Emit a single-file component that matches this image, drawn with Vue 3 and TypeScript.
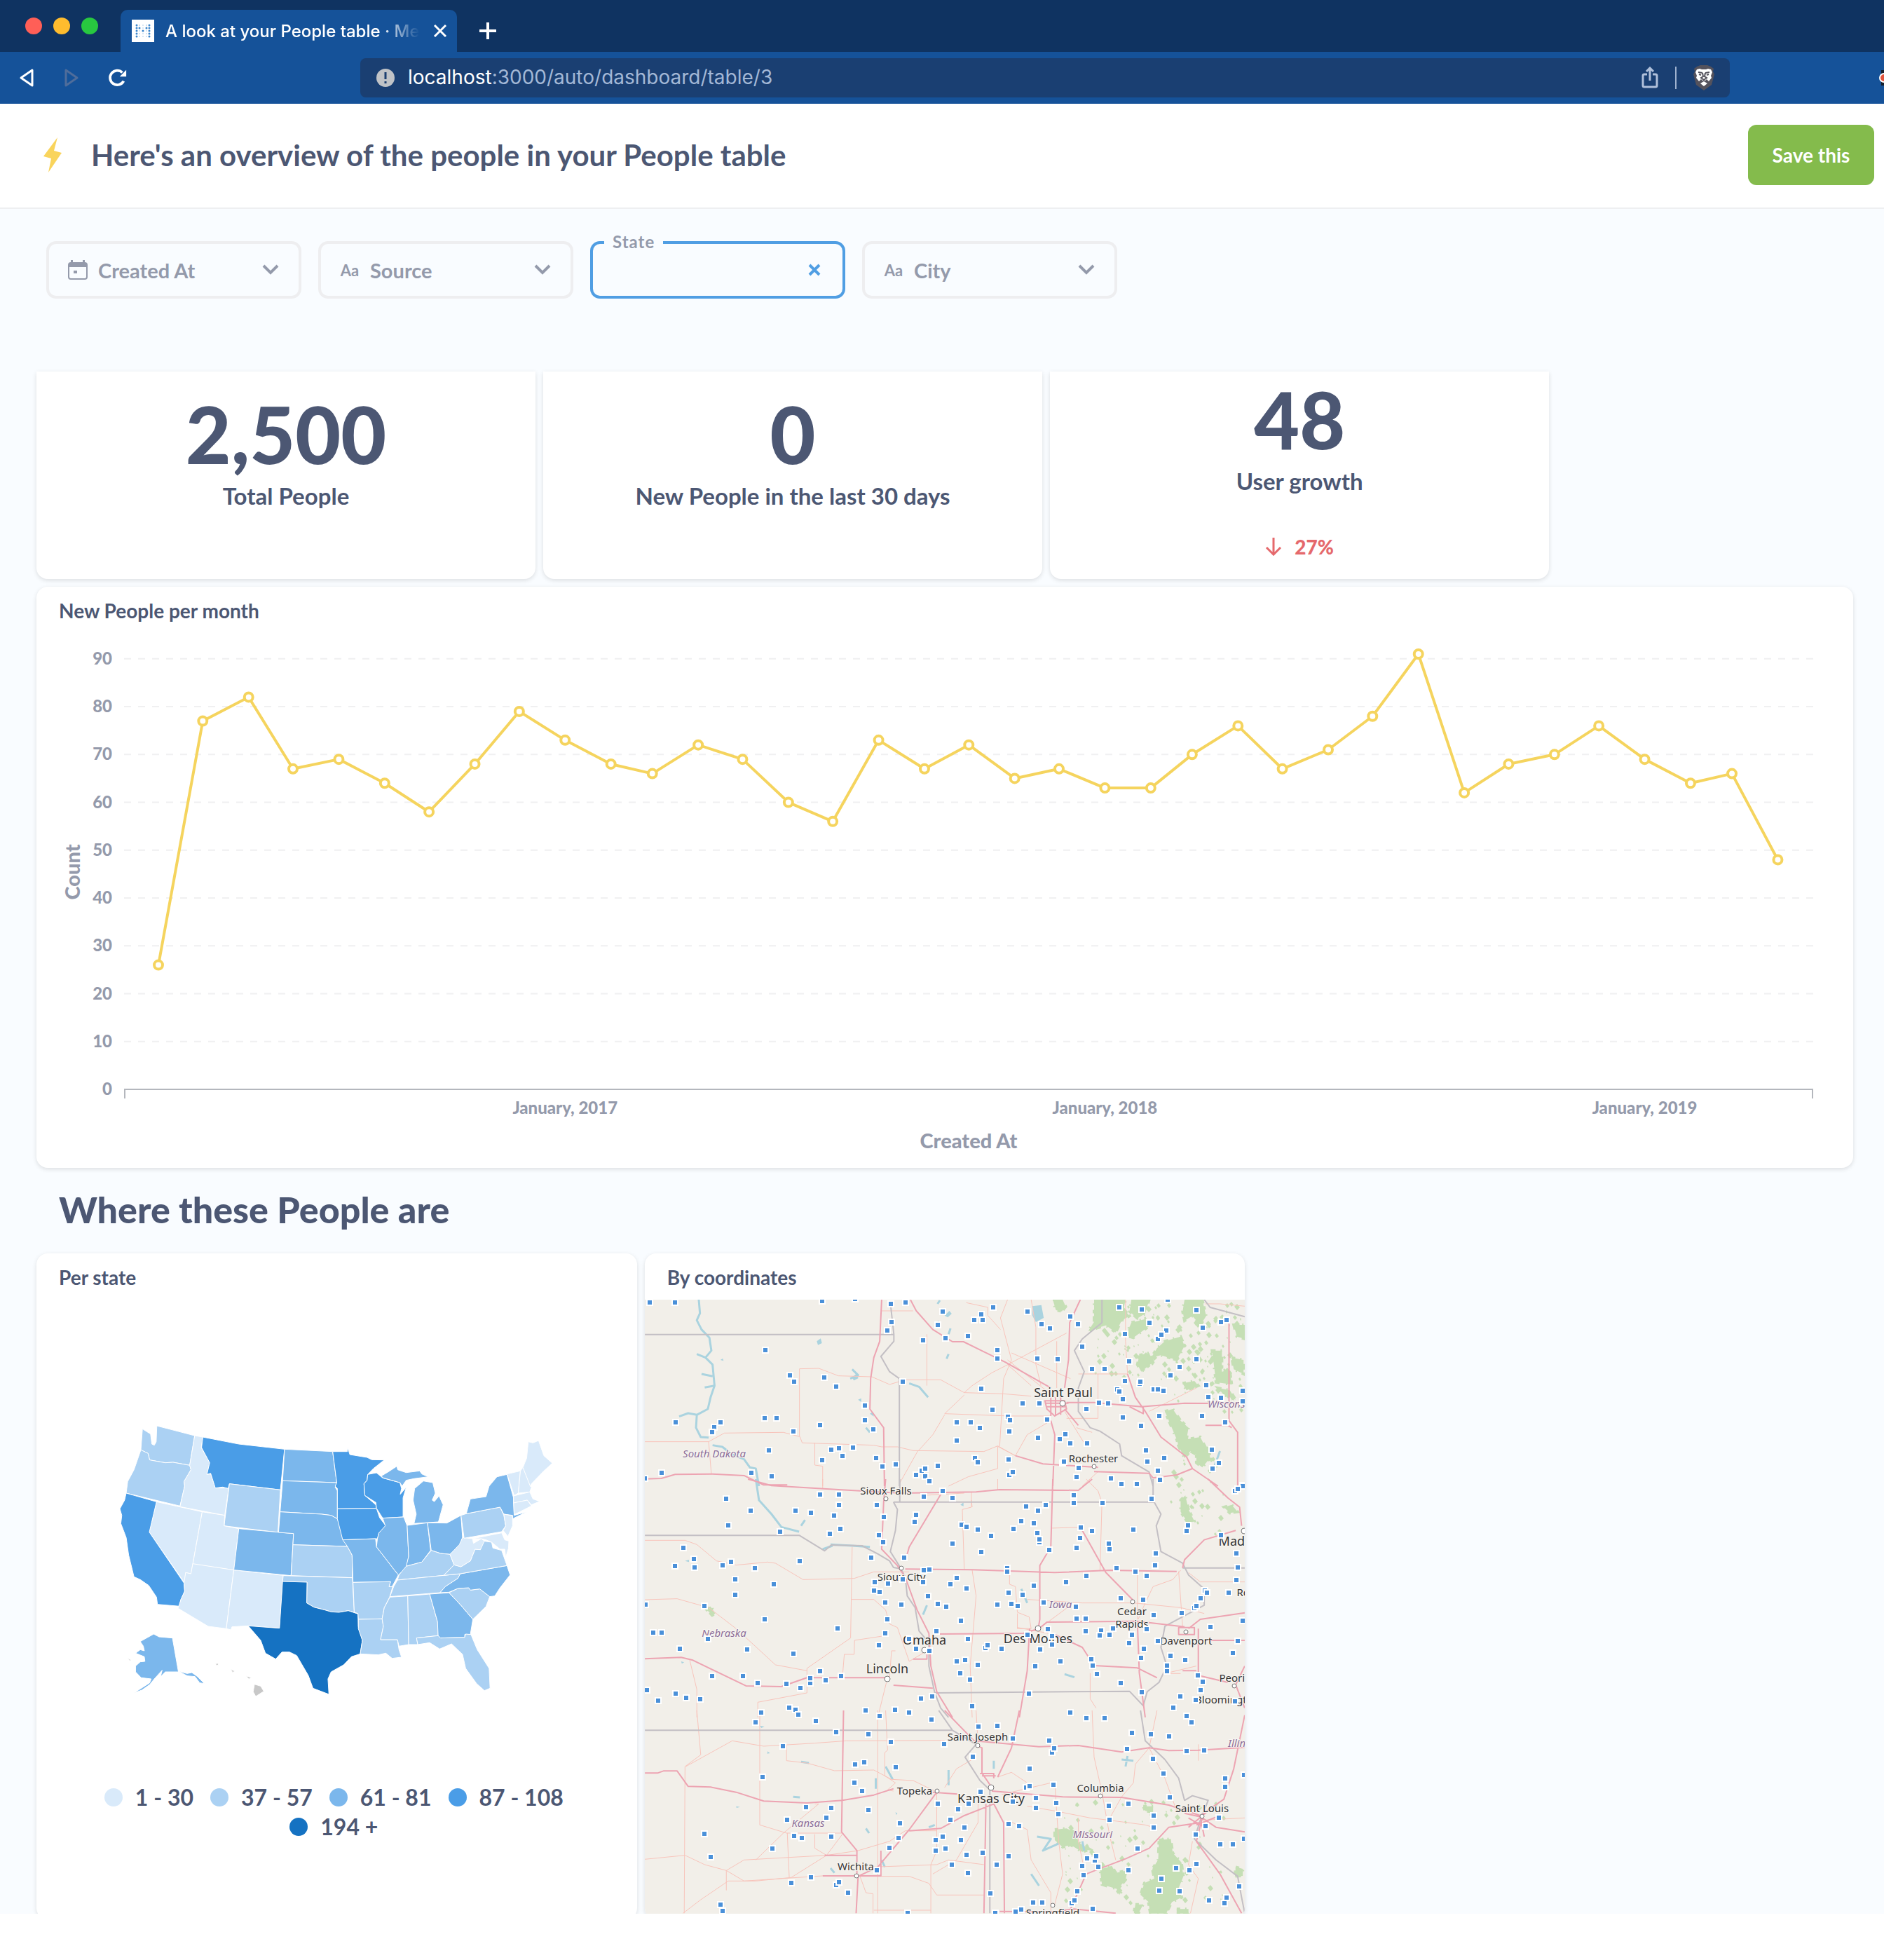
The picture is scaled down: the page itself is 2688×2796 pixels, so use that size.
<script setup lang="ts">
import { ref } from 'vue'

const stateFilter = ref('')

interface Filter { id: string; label: string; icon: 'calendar' | 'text' | 'none' }
const filters: Filter[] = [
  { id: 'created', label: 'Created At', icon: 'calendar' },
  { id: 'source', label: 'Source', icon: 'text' },
  { id: 'state', label: 'State', icon: 'none' },
  { id: 'city', label: 'City', icon: 'text' },
]

/* New people per month, April 2016 to April 2019 */
const monthly: number[] = [
  26, 77, 82, 67, 69, 64, 58, 68, 79, 73, 68, 66, 72, 69, 60, 56, 73, 67, 72,
  65, 67, 63, 63, 70, 76, 67, 71, 78, 91, 62, 68, 70, 76, 69, 64, 66, 48,
]
const start = Date.UTC(2016, 3, 1)
const dayX = (t: number): number => 174 + ((t - start) / 86400000) * 2.11
const countY = (v: number): number => 665 - v * 6.824
const points = monthly.map((v, i) => ({ x: dayX(Date.UTC(2016, 3 + i, 1)), y: countY(v) }))
const line = points.map((p) => `${p.x},${p.y}`).join(' ')
const ticks = [0, 10, 20, 30, 40, 50, 60, 70, 80, 90]
const years = [2017, 2018, 2019].map((y) => ({ text: `January, ${y}`, x: dayX(Date.UTC(y, 0, 1)) }))

const shades = ['#d9eafa', '#abd1f3', '#7bb7ec', '#4a9de7', '#1572c2']
const legend = ['1 - 30', '37 - 57', '61 - 81', '87 - 108', '194 +']

/* [state, shade index, outline] */
const states: [string, number, string][] = [
  ['WA', 1, '188,162 309,204 293,331 240,318 215,320 165,308 160,280 137,265 142,175 168,197 172,240 180,245 186,230'],
  ['OR', 1, '137,265 160,280 165,308 215,320 240,318 293,331 297,350 275,400 277,420 262,505 90,450 95,400 115,350'],
  ['ID', 0, '309,204 335,210 330,255 357,320 348,370 360,368 375,428 418,428 405,545 262,508 277,420 275,400 297,350 293,331'],
  ['MT', 3, '335,210 450,240 596,262 583,436 420,410 416,430 398,424 375,428 360,365 348,370 357,320 331,255'],
  ['WY', 1, '420,410 583,436 575,618 403,590'],
  ['NV', 0, '187,487 333,530 303,752 297,795 280,790 277,835 164,617'],
  ['UT', 0, '333,530 405,545 403,590 450,602 434,779 303,754'],
  ['CA', 3, '90,450 187,487 164,617 275,835 277,870 265,905 260,934 190,926 187,895 162,845 135,820 115,808 98,715 90,640 73,580 76,545 70,517 85,480'],
  ['AZ', 0, '303,752 434,779 410,1030 352,1020 256,943 265,905 277,870 275,835 280,790 297,795'],
  ['NM', 0, '434,779 592,802 580,1028 480,1018 428,1022 425,1035 410,1030'],
  ['CO', 2, '450,602 625,623 617,803 434,779'],
  ['ND', 2, '596,262 750,272 763,405 590,397'],
  ['SD', 2, '590,397 763,405 758,425 765,440 765,560 745,545 715,540 582,530'],
  ['NE', 2, '582,530 715,540 745,545 765,560 782,625 797,678 623,671 625,623 577,618'],
  ['KS', 1, '623,671 797,678 812,715 813,812 617,803'],
  ['OK', 1, '592,803 813,812 819,960 800,953 770,960 745,958 725,950 690,938 667,920 668,831 590,828'],
  ['TX', 4, '590,828 668,831 667,920 690,938 725,950 745,958 770,960 800,953 831,967 832,1020 845,1080 838,1138 810,1150 785,1185 745,1215 735,1245 738,1311 687,1285 672,1230 635,1145 612,1130 588,1130 568,1160 535,1135 520,1080 480,1018 580,1028'],
  ['MN', 3, '750,272 797,272 798,256 805,285 860,297 875,307 915,308 880,345 862,370 860,395 850,410 853,460 888,500 890,515 765,517 765,430 758,420 763,405'],
  ['IA', 3, '765,517 890,515 900,555 920,590 898,620 893,645 782,650 765,560'],
  ['WI', 3, '862,370 890,363 910,385 965,405 970,430 966,455 985,425 975,470 975,552 910,557 890,515 888,490 853,460 850,410 860,395'],
  ['MO', 2, '782,650 887,645 890,680 925,740 945,775 960,800 940,850 930,850 935,829 815,832 812,715 797,678'],
  ['AR', 1, '815,832 935,829 930,850 942,850 932,895 915,940 908,988 832,990 831,965 819,960'],
  ['LA', 1, '832,990 908,988 912,1020 903,1077 957,1077 962,1120 970,1152 940,1157 920,1135 895,1142 838,1138 845,1080 832,1030'],
  ['IL', 2, '910,557 977,552 988,590 993,720 985,770 960,800 945,775 925,740 890,680 893,645 898,620 918,590'],
  ['MI', 2, '905,377 930,357 955,335 958,350 985,362 1028,355 1035,368 1055,380 1010,388 985,395 972,420 965,405 912,385'],
  ['MI', 2, '1040,398 1070,405 1078,450 1068,480 1075,486 1090,462 1103,500 1088,573 1010,580 1017,540 1007,480 1012,430'],
  ['IN', 2, '988,588 1053,577 1063,695 1035,745 985,763 993,720'],
  ['OH', 2, '1053,577 1115,578 1160,545 1165,640 1155,680 1125,712 1095,708 1065,695'],
  ['KY', 1, '985,763 1035,745 1065,695 1095,708 1125,712 1138,757 1105,802 957,822 962,800'],
  ['TN', 1, '957,822 1105,802 1158,795 1150,815 1110,850 1093,876 933,893 945,850'],
  ['MS', 1, '933,895 990,890 993,1098 962,1105 957,1077 903,1077 912,1020 908,988 915,940'],
  ['AL', 1, '990,890 1060,882 1087,1010 1087,1060 1018,1070 1022,1098 993,1098'],
  ['GA', 2, '1060,882 1122,876 1160,930 1198,990 1190,1055 1172,1055 1172,1067 1095,1070 1087,1060 1085,1000'],
  ['FL', 1, '1018,1070 1087,1060 1095,1070 1172,1067 1175,1053 1192,1055 1212,1120 1250,1200 1253,1285 1235,1295 1210,1265 1175,1200 1165,1140 1130,1095 1092,1117 1060,1090 1022,1098'],
  ['SC', 1, '1122,876 1150,858 1185,855 1190,865 1220,860 1252,893 1240,935 1198,990 1160,930'],
  ['NC', 2, '1158,795 1307,760 1317,800 1285,855 1268,890 1252,893 1220,860 1190,865 1185,855 1150,858 1122,874 1093,876 1110,850 1150,815'],
  ['VA', 1, '1105,802 1138,757 1160,765 1190,740 1205,690 1222,692 1230,655 1258,660 1262,685 1290,695 1307,760 1158,795'],
  ['WV', 0, '1125,712 1155,670 1165,640 1197,645 1200,665 1225,645 1235,655 1222,692 1205,690 1190,740 1160,765 1138,757'],
  ['PA', 1, '1160,545 1177,538 1285,510 1297,545 1303,590 1290,615 1170,643'],
  ['NY', 2, '1177,538 1190,475 1240,465 1250,420 1275,380 1307,370 1328,470 1330,545 1370,530 1325,560 1325,545 1297,540 1285,510'],
  ['NJ', 0, '1297,540 1325,547 1325,590 1310,635 1295,610 1303,590'],
  ['MD', 0, '1197,645 1290,620 1300,650 1313,655 1312,685 1303,725 1300,690 1285,690 1258,660 1240,650 1225,645'],
  ['VT', 0, '1307,368 1350,355 1343,450 1330,460'],
  ['NH', 0, '1350,355 1358,340 1385,425 1380,445 1343,450'],
  ['ME', 0, '1358,340 1370,300 1375,230 1390,235 1408,225 1425,290 1452,322 1425,355 1385,410 1382,422'],
  ['MA', 0, '1328,462 1380,445 1390,475 1412,485 1385,500 1372,480 1328,492'],
  ['CT', 0, '1328,492 1372,480 1385,505 1330,542'],
  ['AK', 2, '135,1085 178,1053 195,1065 238,1070 257,1215 215,1215 200,1235 205,1208 180,1245 165,1270 140,1293 115,1305 165,1262 170,1245 138,1240 120,1215 120,1190 135,1172 150,1170 148,1150 120,1135 135,1120 148,1125 145,1105'],
  ['AK', 2, '257,1212 285,1222 300,1218 318,1235 340,1265 325,1262 310,1235 285,1232'],
]
const islands = '376,1180 384,1178 384,1187 378,1187|424,1204 438,1212 430,1217|473,1232 490,1240 482,1246|500,1268 520,1276 530,1298 504,1320 496,1300|94,1156 106,1164 102,1168'.split('|')

/* Map content is kept in three stacked bands, each 330 units tall */
const bands: string[] = [
  '31,235 94,235 469,228 553,220 643,240 681,235 776,272 645,318 635,355 763,331 725,396 782,387 839,378 855,309 877,309 874,286 904,254 991,272 1100,295 1026,327 1048,346 1119,327 1225,254 1282,263 1347,222 1420,268 1301,322 1437,341 1483,318 1496,309 1344,355 1323,391 1331,373 1239,369 1130,424 325,437 914,437 914,474 1015,474 1067,478 1249,487 1420,478 1377,510 1154,520 1187,520 1355,547 387,547 398,574 474,556 504,593 673,574 874,602 1239,570 1275,582 1278,574 1219,606 1225,616 1312,607 1323,607 1336,611 1445,588 1233,648 1450,638 1483,643 1538,611 1538,657 578,675 901,693 978,666 1021,666 1173,662 1195,666 1141,689 1233,726 1326,721 1434,721 1040,735 940,724 947,739 811,748 847,748 869,771 1279,762 1494,748 96,748 210,748 194,767 188,790 322,730 352,730 463,758 578,739 599,776 395,785 945,785 1087,799 1073,818 1018,812 811,826 1100,836 1143,836 1292,867 1459,863 333,868 491,863 512,859 520,890 547,854 469,909 605,900 621,937 656,928 763,932 857,900 864,918 942,905 722,955 730,945 708,973 730,977 741,1000 1079,922 1083,914 1121,941 1296,914 1339,900 1323,955 1478,922 1461,945 61,964 289,964 341,978 945,972 953,960 1116,982 1203,987 1230,1010 1268,1010 1328,992 1538,1017 18,987',
  '224,84 463,66 512,66 776,52 727,75 800,80 1108,70 1108,102 1181,102 1307,84 1538,29 1518,52 1526,42 286,134 401,134 441,143 512,111 607,111 499,157 626,162 708,153 703,184 988,116 1037,111 1018,134 229,198 515,212 362,226 488,235 613,240 823,194 836,203 864,216 975,180 1007,189 955,212 898,244 1015,230 1127,208 1154,221 1124,253 1260,217 1396,221 1399,198 1483,240 1021,270 1021,258 623,271 800,276 1200,299 1197,276 1116,295 1046,304 874,313 115,294 1317,318 1521,318 142,341 145,377 94,373 216,368 237,355 411,350 297,382 594,336 678,336 1315,368 1526,377 727,391 741,386 939,380 939,395 1217,382 1265,395 1141,414 1293,414 811,423 1521,432 248,428 346,450 602,441 637,446 673,428 725,441 795,451 836,469 1007,455 1089,441 248,496 600,478 615,483 738,501 942,487 978,496 1442,478 1447,487 1502,487 1431,510 1228,510 1285,515 20,538 170,542 629,528 670,538 762,533 784,547 915,538 950,533 966,542 1032,528 1113,546 1414,552 1420,542 1383,574 1312,583 322,601 635,601 822,606 1116,597 1138,597 1538,606 507,638 1456,634 39,656 61,656 629,661 759,652 991,665 1043,643 1138,652 1178,648 1174,670 1200,665 1209,638 1257,665 1293,643 178,684 689,684 839,684 1053,672 1053,707 1249,703 1323,693 1526,693 107,725 278,730 613,712 708,725 741,734 884,722 889,712 925,725 1023,730 1287,725 1513,744 395,748 811,780 833,775 864,794 1075,780 1152,771 1157,799 1279,766 1355,757 1391,775 1345,799 1345,822 463,822 820,831 844,858 1010,801 1168,835 1424,840 1437,867 188,844 268,844 439,872 439,853 477,862 517,844 305,872 378,877 414,895 1228,872 1282,913 1431,904 23,904 97,917 123,936 158,941 52,949 719,940 749,931 994,917 1380,931 1418,945 1519,950 850,972 1361,977 384,977 401,986 314,1000 580,991 654,986 689,1000 1100,1000',
  '408,18 615,23 1141,33 1187,33 1396,23 300,51 452,46 746,38 1407,51 866,69 915,65 504,93 586,102 953,120 1257,97 1304,102 1350,111 643,134 779,143 368,152 1046,129 1053,179 1059,161 1244,166 1396,175 1440,170 852,198 1309,207 575,221 553,230 656,243 996,248 1337,271 1541,276 317,285 1494,290 551,308 1494,327 570,344 988,330 996,325 1056,317 872,349 1013,376 1353,372 428,413 491,418 762,399 841,399 953,390 814,423 1013,418 1064,395 1198,409 1247,399 586,427 1070,445 480,459 1312,450 1478,459 379,468 795,468 667,482 1200,468 831,500 942,486 969,495 1312,500 1443,495 170,527 398,537 417,546 491,541 662,546 776,541 757,555 822,555 1418,532 1541,550 1480,573 1513,573 343,592 640,587 757,600 782,592 1271,592 877,610 836,619 942,624 186,628 1143,633 1162,643 1165,624 1130,665 1170,670 1421,656 798,661 912,661 607,683 1247,683 1369,674 1402,683 839,697 1133,706 1331,720 441,715 390,738 504,747 512,734 534,779 1529,752 1325,770 1377,775 1117,775 896,784 1497,802 1453,812 1491,825 211,830 216,857 1005,821 1029,821 1103,825 1111,812 1157,848 961,862 975,853 909,867 686,867',
]
const pins = bands.flatMap((band, k) =>
  band.split(' ').map((pair) => {
    const [x, y] = pair.split(',').map(Number)
    return { x: Math.round(x * 0.5612) - 4, y: Math.round(y / 3) + k * 330 - 4 }
  }),
)

const forest: string[] = [
  'M1055 222h25l8 30-10 20-15-5zM1160 222h80l-5 40 15 30-20 20-15 50-25-30-20 10-25 15 15-40zM1255 222h45l-10 60-20 20-20-30zM1390 222h45l10 70-15 40-20-40-20 20-5-40zM1255 320l35-15 10 30-40 50-20-10zM1340 400l40-20 10 40-20 60-40-20-25 10 15-40zM1275 460l25-10 10 40-30 40-10-30zM1460 440h25v90l20-5 5 60-40-10zM1515 330h28v60l-20-10zM1510 470l30 10v60l-25-20zM1340 700l20-10 20 50 20 30-5 50 35-10 15 50-10 40-30-30-15 30-15-50-5-30zM1420 870l30-20 5 50-20 40-15-20zM1185 275l30-10 5 25-25 20zM1385 580l30-10 10 20-30 20zM1475 600l30 10 15 40-30-20z',
  'M1380 90l12-20 8 60 15 50-15 10-20-50zM1490 120l20-10 15 30-20 5zM170 550l15-5 12 30-8 8z',
  'M1060 510l30-5 25 20 5 40 30 30-20 10-30-30-20 10-20-30zM1285 410h25v25l-20-5zM1325 555l30-5 5 60 22 40 5 60-12 50 8 40-25 20-15 49h-40l-5-50-20-30 10-50 25-20-5-40 15-40zM1175 680l30-15 10 30 30-10-5 40-20 40-40-20zM1220 750l12 20-8 20zM1265 830h20l-12 38h-12zM1370 850h30v19h-30zM1520 670l18 8v30l-20 2z',
]

/* Loose woodland around the larger forests: [left, top, width, height, amount] */
const woodland: [number, number, number, number, number][] = [
  [650, 78, 210, 110, 170],
  [760, 180, 100, 60, 24],
  [755, 300, 80, 110, 30],
  [600, 790, 240, 150, 90],
]
let seed = 7
const random = (): number => {
  seed = (seed * 16807) % 2147483647
  return seed / 2147483647
}
const specks = woodland
  .flatMap(([x, y, w, h, n]) =>
    Array.from({ length: n }, () => {
      const s = 1 + Math.floor(random() * 4)
      return `M${Math.round(x + random() * w)} ${Math.round(y + random() * h)}l${s} -${s}l${s} ${s + 1}l-${s} ${s}z`
    }),
  )
  .join('')

const water: string[] = [
  'M155 222L158 280L150 310L162 350L182 385L187 440L172 470L190 500L195 590L185 640L178 690L150 715L148 770L160 810L180 812M150 715L128 708L105 722M172 470L150 455M190 550L162 540M195 590L170 598M190 845L215 852L240 885L270 905L285 940L300 945L308 1020M545 520L560 545L540 560M580 770L590 790M768 225L762 240M795 345L790 370M790 455L785 475M690 580L715 595L738 640M1480 870L1465 940',
  'M300 0L308 90L340 150L365 205L410 225M425 175L415 200M490 280L545 285L590 290M470 300L495 285M1085 835L1110 848M975 470L990 530M735 540L725 580',
  'M630 240L648 295M790 255V320M605 290V335M580 505L588 525M1015 540L1050 550L1030 600L1070 570M1130 560L1135 600M1000 700L1020 750M1230 210L1260 215M1245 195L1240 240M905 215V250M490 675L500 695M620 640L628 670M415 220L435 225M395 370L412 372M740 500L755 490',
]
const borders: string[] = [
  'M18 371H651M643 250L651 371V400L618 465L640 530L665 560V1020M1180 222V320L1130 390L1110 440L1135 530L1120 600V700L1150 770L1175 785L1225 840L1230 890L1300 960L1310 1020M1440 222L1455 255L1543 295',
  'M18 241H411L475 307L492 282L570 285L610 320L640 350L650 378L672 385M666 0V98M650 98H1312M650 98L660 130L655 220L642 310L668 380L680 420L685 500L705 550L715 650L740 700V800L755 915L1250 908L1285 970L1295 910L1325 870L1345 800L1330 720L1340 630L1440 540V470L1400 410L1385 360L1330 310L1318 200L1330 150L1310 90V0M1385 380H1543M755 915L770 980L790 1020',
  'M18 85H800M765 0L800 85L860 145L832 200L870 300L895 340V868M1278 0L1290 130L1340 210L1375 290L1390 385L1410 365L1450 385L1430 470L1415 550L1470 640L1525 710L1535 800L1543 868',
]
const major: string[] = [
  'M620 222L615 400L600 470L592 560L590 690L625 770L627 1020M693 222L708 270L750 350L800 402H828L880 445L935 490L1050 600M18 989L60 987L95 970L190 968L270 975L320 1015H380M1125 222L1098 320L1095 480L1085 600M1090 662L1160 662L1280 680L1390 665L1543 667M1245 540L1265 640L1290 700L1330 810L1395 895L1410 945L1475 1020M1050 740L1060 800L1055 1020M960 890L1030 925L1170 940M1160 958L1300 965L1310 985L1370 972L1410 945M1503 300V740L1525 790V1020M1035 655H1085L1090 690L1060 720L1040 690ZM1035 665H1095M1040 680H1090M1050 640V720M1062 640V715M1075 640V715M1085 690L1120 760M1250 680L1285 710V680M1443 760H1500L1510 770',
  'M280 0L340 28L510 45L670 60L860 55L920 45L1120 48L1155 0M630 0L625 100L620 300L660 370L680 420L710 560L740 660L745 800L760 910L800 1020M775 52L690 290L680 350M680 385L850 388L1060 400L1200 390L1370 395M1055 0L1050 290L1022 370V600L1018 640M760 663L980 660L1020 640L1040 612L1270 608L1390 632M996 640L990 820L970 1020M18 769L110 763L140 775L275 885L365 888L430 850H630M1260 520L1190 400L1130 220M1400 640L1430 600L1543 572M1425 640V840L1500 870M1060 665L1130 720L1160 798L1270 808L1320 850M1450 0L1500 80L1530 120L1535 200M1385 380L1390 345L1440 260L1520 220M1270 610L1275 830L1290 1020M1385 820H1420M1375 635H1415V665H1375ZM1543 800L1520 880L1543 980M700 770H735V735M650 882L750 895M1420 690H1543',
  'M18 268H50L65 259H100L128 325L185 328L250 350L320 388L430 396L520 385L600 362L650 335M780 0L855 130L1020 155L1120 150L1230 178L1300 160L1350 172L1425 170L1543 158M860 150L875 160V268L900 330M970 0L950 160L915 285M870 270H905V290M875 280H910M760 350L690 510L610 670L560 710L555 868M523 0L518 520L557 600V700M900 345L1080 370L1230 372L1350 405L1430 450M905 400L830 450L770 505L690 515M885 400L880 868M905 400L930 480L932 868M1100 850L1140 700L1170 680L1240 635L1300 590L1350 500L1430 480M1430 450L1490 380L1515 250L1543 20M1435 460L1470 500L1543 520M1435 460L1420 560L1480 700L1535 868M1390 440L1430 455L1440 540M1400 460L1440 500M1400 500L1450 430M1420 490L1480 450M920 860L1050 862L1110 850L1215 868M475 620H557M470 708H618V600M750 350L812 358',
]
const minor: string[] = [
  'M18 830L180 830L220 793L370 790L411 808V518L460 516L510 548L592 552M412 808L418 835L600 845L620 852H660L700 868L880 872L915 848L960 890M450 835V930L470 935V1020M620 270H700M735 370V590M592 550L640 585L680 565H770L830 620L930 625L1000 635M830 620L850 590L900 535L935 505L1090 365M780 710L945 720H1050M780 710L830 630M940 222L922 300L950 480L930 560L920 850M835 235L890 255V290L922 350M1000 222L1012 340V500L1025 590M1065 400V600M1240 222V400L1245 540H1120M665 1010L710 875L750 800L780 715M790 1020L840 980L915 945V850L960 890L990 800L1050 740M1085 700L1140 850M1170 540V730H1090M1115 770L1155 790M180 830L187 968M1170 958L1130 1020M940 480L1060 640M950 450L1100 560M1300 700L1420 600M1443 240H1480L1543 250M940 500L1000 590',
  'M18 262H120L150 280L200 350L250 368L330 355L350 360L420 430L550 425L600 397M545 290L541 680L430 810V915L305 955V1020M543 515H600L630 560L640 620L660 635L690 780M18 516L100 512L180 550L250 640L350 795L430 820M600 397H690M848 90L850 120M848 57V120L825 130L830 390M720 70L830 60M850 390L860 500L845 800L850 1020M945 400V450L960 460L965 570L995 590L1000 640M990 515L1130 530L1260 530L1380 550L1440 575M1140 0L1170 50L1180 100L1175 390M1050 210L1125 206M1000 640H965V575M965 635L1060 665M1380 390L1360 430L1310 460L1290 530L1272 600M1375 395L1385 630M132 775L150 900V1020M520 850L525 750H550L551 690L630 670M632 870L610 1020M655 735H645L640 850M690 780L730 740M1150 830V940L1165 980M1345 830L1420 800M1345 832H1380M1400 400L1430 440H1543M1270 410V600M1020 640L1100 540M470 0V40M915 0V45',
  'M150 0L160 190L120 240L118 868M310 0V490L378 525H520M122 240L240 130L320 153L450 140L530 130L780 128M378 150V215L430 225L500 258L600 255L645 295L700 300L755 345M630 0L635 170L628 180V280L655 310L635 340L650 345M610 0V868M860 0L865 140M760 350V600L745 660V868M18 637L120 620L170 660L225 685L270 640L480 620L560 600L640 560L680 515H760M225 685L270 730L470 708M115 868L160 810L230 730L300 730L390 715L480 620L520 530M225 685V770M380 525L385 715M450 400L460 400L370 525L300 640M450 530V590L480 620M560 710L690 710L740 740L760 790H880M600 670L760 660L790 640L880 660M565 710L580 780L598 785V868M850 210L810 250L780 330M865 400V480L810 640L750 700M925 360L1050 310V300M915 285L950 265L990 310L980 330M990 410L1060 430L1150 460L1200 470L1290 490L1310 500M940 470L990 510L1000 640L1050 780V868M1060 310L1070 560L1080 700L1060 830M1120 460V560L1135 680M1155 0L1160 200L1180 350L1200 540L1215 640M1230 370L1200 460M1320 0L1300 160M1300 160L1340 290L1370 430M1300 160L1265 230L1260 310L1230 370M1425 145V215M600 855H745M1430 470L1543 460M1410 560L1400 660L1425 720L1405 868',
]
const lakes: string[] = [
  'M545 555l10-15 6 18-12 10zM455 400l10-12 3 20-10 8zM780 290l12-20 6 12-10 16zM755 320l10-8 2 20zM210 480l6-6 2 10zM560 650l8-6v16zM590 710l8-8 2 20zM1003 250L1026 245L1032 300L1012 318L1003 290z',
  'M120 350l10-5v10zM820 110l8-10v16zM110 780l8 4-6 6z',
  'M310 65l12 4-8 6zM250 410l10 3-9 4zM465 110l6 4zM330 175l6 8-7 2zM655 435l5 6-3 6z',
]

interface Place { name: string; x: number; y: number; size: number; region?: boolean; dot?: [number, number] }
const places: Place[] = [
  { name: 'Saint Paul', x: 607, y: 213, size: 18, dot: [606, 222] },
  { name: 'Rochester', x: 650, y: 306, size: 15, dot: [651, 312] },
  { name: 'Sioux Falls', x: 354, y: 352, size: 15, dot: [354, 358] },
  { name: 'Sioux City', x: 376, y: 475, size: 15, dot: [376, 457] },
  { name: 'Cedar', x: 705, y: 524, size: 15, dot: [706, 505] },
  { name: 'Rapids', x: 705, y: 542, size: 15 },
  { name: 'Des Moines', x: 571, y: 564, size: 18, dot: [571, 543] },
  { name: 'Davenport', x: 782, y: 566, size: 15, dot: [782, 548] },
  { name: 'Omaha', x: 409, y: 566, size: 18, dot: [409, 574] },
  { name: 'Lincoln', x: 356, y: 607, size: 18, dot: [356, 615] },
  { name: 'Madison', x: 865, y: 425, size: 18, dot: [865, 404] },
  { name: 'Rockford', x: 886, y: 497, size: 15 },
  { name: 'Peoria', x: 852, y: 619, size: 15, dot: [851, 625] },
  { name: 'Bloomington', x: 841, y: 650, size: 15 },
  { name: 'Saint Joseph', x: 485, y: 703, size: 15, dot: [485, 710] },
  { name: 'Topeka', x: 395, y: 780, size: 15, dot: [427, 775] },
  { name: 'Kansas City', x: 504, y: 792, size: 18, dot: [504, 770] },
  { name: 'Columbia', x: 660, y: 776, size: 15, dot: [660, 782] },
  { name: 'Saint Louis', x: 805, y: 805, size: 15, dot: [805, 811] },
  { name: 'Wichita', x: 311, y: 888, size: 15, dot: [312, 896] },
  { name: 'Springfield', x: 592, y: 954, size: 15, dot: [592, 938] },
  { name: 'South Dakota', x: 109, y: 299, size: 15, region: true },
  { name: 'Wisconsin', x: 846, y: 228, size: 15, region: true },
  { name: 'Nebraska', x: 123, y: 555, size: 15, region: true },
  { name: 'Iowa', x: 603, y: 514, size: 15, region: true },
  { name: 'Illinois', x: 864, y: 712, size: 15, region: true },
  { name: 'Kansas', x: 243, y: 826, size: 15, region: true },
  { name: 'Missouri', x: 649, y: 842, size: 15, region: true },
]
</script>

<template>
  <div class="page">
    <header class="browser">
      <div class="tab-strip">
        <div class="lights"><i class="red"></i><i class="amber"></i><i class="green"></i></div>
        <div class="tab">
          <svg class="favicon" viewBox="0 0 32 32" aria-hidden="true">
            <rect width="32" height="32" fill="#fff" />
            <g fill="#3c86cc">
              <circle v-for="n in 5" :key="'l' + n" cx="7" :cy="4 + n * 4" r="1.5" />
              <circle v-for="n in 5" :key="'r' + n" cx="25" :cy="4 + n * 4" r="1.5" />
              <circle cx="11" cy="12" r="1.5" /><circle cx="21" cy="12" r="1.5" /><circle cx="16" cy="16" r="1.5" />
            </g>
            <g fill="#c9def2">
              <circle v-for="n in 5" :key="'m' + n" cx="11" :cy="n === 2 ? 8 : 4 + n * 4" r="1" />
              <circle v-for="n in 5" :key="'n' + n" cx="21" :cy="n === 2 ? 8 : 4 + n * 4" r="1" />
              <circle cx="16" cy="8" r="1" /><circle cx="16" cy="12" r="1" /><circle cx="16" cy="20" r="1" /><circle cx="16" cy="24" r="1" />
            </g>
          </svg>
          <span class="tab-title">A look at your People table · Metabase</span>
          <button class="plain" aria-label="Close tab">
            <svg width="20" height="20" viewBox="0 0 20 20"><path d="M2 2L18 18M18 2L2 18" stroke="#fff" stroke-width="3" /></svg>
          </button>
        </div>
        <button class="plain new-tab" aria-label="New tab">
          <svg width="24" height="24" viewBox="0 0 24 24"><path d="M12 0V24M0 12H24" stroke="#fff" stroke-width="4" /></svg>
        </button>
      </div>
      <div class="toolbar">
        <nav class="nav">
          <button class="plain" aria-label="Back">
            <svg width="24" height="28" viewBox="0 0 24 28"><path d="M20 3V25L4 14Z" fill="none" stroke="#fff" stroke-width="3" stroke-linejoin="round" /></svg>
          </button>
          <button class="plain" aria-label="Forward" disabled>
            <svg width="24" height="28" viewBox="0 0 24 28"><path d="M4 3V25L20 14Z" fill="none" stroke="#4f6d9b" stroke-width="3" stroke-linejoin="round" /></svg>
          </button>
          <button class="plain" aria-label="Reload">
            <svg width="28" height="28" viewBox="0 0 30 28"><path d="M24 19A11 11 0 1 1 22 6" fill="none" stroke="#fff" stroke-width="4" /><path d="M28 2V12H18Z" fill="#fff" /></svg>
          </button>
        </nav>
        <div class="address">
          <svg width="26" height="26" viewBox="0 0 26 26" aria-hidden="true"><circle cx="13" cy="13" r="13" fill="#c0c3c7" /><path d="M13 5V15M13 18V21" stroke="#1b3f70" stroke-width="3" /></svg>
          <span class="url"><b>localhost</b>:3000/auto/dashboard/table/3</span>
          <button class="plain" aria-label="Share">
            <svg width="24" height="32" viewBox="0 0 24 32"><path d="M8 11H4Q2 11 2 13V27Q2 29 4 29H20Q22 29 22 27V13Q22 11 20 11H16M12 20V3M7 7L12 2L17 7" fill="none" stroke="#b0c0da" stroke-width="3" /></svg>
          </button>
          <i class="rule"></i>
          <button class="plain" aria-label="Shields">
            <svg width="30" height="36" viewBox="0 0 30 36">
              <path d="M5 2L10 0H20L25 2L29 5L28 9L30 13L26 28L15 36L4 28L0 13L2 9L1 5Z" fill="#54525c" />
              <path d="M5 6L9 5L12 6H18L21 5L25 6L27 10L25 15L26 18L22 23L19 20L17 22H13L11 20L8 23L4 18L5 15L3 10Z" fill="#fff" />
              <path d="M7 10L13 11M23 10L17 11M13 11L14 16L11 18L15 21L19 18L16 16L17 11M8 13L11 14M22 13L19 14" fill="none" stroke="#54525c" stroke-width="2" />
              <path d="M15 23L20 26L15 30L10 26Z" fill="#fff" />
            </svg>
          </button>
        </div>
        <svg class="extension" width="8" height="26" viewBox="0 0 8 26" aria-hidden="true"><rect x="4" y="2" width="4" height="22" fill="#15202c" /><circle cx="8" cy="13" r="6" fill="#e2543c" stroke="#fff" stroke-width="2" /></svg>
      </div>
    </header>

    <section class="title-bar">
      <svg width="26" height="50" viewBox="0 0 26 50" aria-hidden="true"><path d="M20 0L0 27L11 30L7 50L26 22L15 19Z" fill="#f9d45c" /></svg>
      <h1>Here's an overview of the people in your People table</h1>
      <button class="save">Save this</button>
    </section>

    <main class="dashboard">
      <form class="filters" @submit.prevent>
        <div v-for="f in filters" :key="f.id" class="filter" :class="{ active: f.id === 'state' }">
          <template v-if="f.id === 'state'">
            <label class="float-label" for="state">{{ f.label }}</label>
            <input id="state" v-model="stateFilter" type="text" />
            <button class="plain" type="button" aria-label="Clear state" @click="stateFilter = ''">
              <svg width="20" height="20" viewBox="0 0 20 20"><path d="M3 3L17 17M17 3L3 17" stroke="#509ee3" stroke-width="4" /></svg>
            </button>
          </template>
          <template v-else>
            <svg v-if="f.icon === 'calendar'" class="icon" width="30" height="30" viewBox="0 0 30 30" aria-hidden="true">
              <rect x="2" y="5" width="26" height="23" rx="3" fill="none" stroke="#949aab" stroke-width="2" />
              <path d="M2 5H28V11H2ZM5 1H8V6H5ZM22 1H25V6H22ZM9 16H14V20H9Z" fill="#949aab" />
            </svg>
            <span v-else class="aa" aria-hidden="true">Aa</span>
            <select :id="f.id" :aria-label="f.label"><option>{{ f.label }}</option></select>
            <svg width="24" height="16" viewBox="0 0 24 16" aria-hidden="true"><path d="M2 2L12 12L22 2" fill="none" stroke="#949aab" stroke-width="4" /></svg>
          </template>
        </div>
      </form>

      <div class="grid">
        <article class="card stat">
          <strong>2,500</strong><span>Total People</span>
        </article>
        <article class="card stat">
          <strong>0</strong><span>New People in the last 30 days</span>
        </article>
        <article class="card stat compared">
          <strong>48</strong><span>User growth</span>
          <p class="trend">
            <svg width="24" height="26" viewBox="0 0 24 26" aria-hidden="true"><path d="M12 0V24M2 14L12 24L22 14" fill="none" stroke="#e5696c" stroke-width="3" /></svg>
            27%
          </p>
        </article>

        <article class="card wide">
          <h3>New People per month</h3>
          <svg class="chart" viewBox="0 0 2592 777" role="img" aria-label="New People per month">
            <g v-for="t in ticks" :key="t">
              <line v-if="t" x1="125" x2="2535" :y1="countY(t)" :y2="countY(t)" class="gridline" />
              <text x="108" :y="countY(t) + 8" text-anchor="end" class="tick">{{ t }}</text>
            </g>
            <path d="M126 678V665H2534V678" class="axis" />
            <polyline :points="line" class="series" />
            <circle v-for="(p, i) in points" :key="i" :cx="p.x" :cy="p.y" r="6" class="dot" />
            <text v-for="y in years" :key="y.text" :x="y.x" y="700" text-anchor="middle" class="tick">{{ y.text }}</text>
            <text x="1330" y="749" text-anchor="middle" class="axis-name">Created At</text>
            <text transform="translate(62 355) rotate(-90)" text-anchor="middle" class="axis-name">Count</text>
          </svg>
        </article>

        <h2>Where these People are</h2>

        <article class="card half">
          <h3>Per state</h3>
          <svg class="states" viewBox="-22 0 1568 1440" preserveAspectRatio="none" role="img" aria-label="People per state">
            <polygon v-for="(s, i) in states" :key="i" :points="s[2]" :fill="shades[s[1]]" />
            <polygon v-for="p in islands" :key="p" :points="p" fill="#c8c8c8" />
          </svg>
          <ul class="legend">
            <li v-for="(l, i) in legend" :key="l"><i :style="{ background: shades[i] }"></i>{{ l }}</li>
          </ul>
        </article>

        <article class="card half">
          <h3>By coordinates</h3>
          <svg class="map" viewBox="10 74 857 884" preserveAspectRatio="xMinYMin slice" role="img" aria-label="People by coordinates">
            <rect x="10" y="74" width="857" height="884" fill="#f2efe9" />
            <path :d="specks" fill="#c5dfb5" />
            <g v-for="k in 3" :key="k" :transform="`translate(0 ${(k - 1) * 330}) scale(.5612 .3333)`">
              <path :d="forest[k - 1]" class="forest" />
              <path :d="lakes[k - 1]" fill="#aad3df" />
              <path :d="water[k - 1]" class="water" />
              <path :d="minor[k - 1]" class="minor" />
              <path :d="borders[k - 1]" class="border" />
              <path :d="major[k - 1]" class="major" />
            </g>
            <template v-for="p in places" :key="p.name">
              <circle v-if="p.dot" :cx="p.dot[0]" :cy="p.dot[1]" :r="p.size > 15 ? 4 : 3" class="town" />
              <text :x="p.x" :y="p.y" :font-size="p.size" text-anchor="middle" class="place" :class="{ region: p.region }">{{ p.name }}</text>
            </template>
            <rect v-for="(p, i) in pins" :key="i" :x="p.x" :y="p.y" width="8" height="8" class="pin" />
          </svg>
        </article>
      </div>
    </main>
  </div>
</template>

<style>
body {
  margin: 0;
  background: #fff;
}
</style>

<style scoped>
.page {
  font-family: Lato, "Noto Sans", sans-serif;
  font-weight: 700;
  color: #4c5773;
}
button,
input,
select {
  font: inherit;
  color: inherit;
}
.plain {
  display: flex;
  padding: 0;
  border: 0;
  background: none;
}
.browser {
  font-family: Inter, Roboto, sans-serif;
  font-weight: 500;
  color: #fff;
}
.tab-strip {
  display: flex;
  align-items: flex-end;
  height: 74px;
  background: #0f3361;
}
.lights {
  display: flex;
  gap: 16px;
  align-self: center;
  padding: 0 32px 0 36px;
}
.lights i {
  width: 24px;
  height: 24px;
  border-radius: 50%;
}
.red { background: #ff5f57; }
.amber { background: #febc2e; }
.green { background: #28c840; }
.tab {
  display: flex;
  align-items: center;
  gap: 16px;
  box-sizing: border-box;
  width: 480px;
  height: 60px;
  padding: 0 14px 0 16px;
  border-radius: 10px 10px 0 0;
  background: #155299;
}
.favicon {
  flex: none;
  width: 32px;
  height: 32px;
}
.tab-title {
  flex: 1;
  overflow: hidden;
  white-space: nowrap;
  font-size: 24px;
  mask-image: linear-gradient(to right, #000 84%, transparent 99%);
}
.new-tab {
  margin: 0 0 18px 32px;
}
.toolbar {
  display: flex;
  align-items: center;
  height: 74px;
  background: #155299;
}
.nav {
  display: flex;
  gap: 40px;
  width: 488px;
  padding-left: 26px;
}
.address {
  flex: 1;
  display: flex;
  align-items: center;
  gap: 24px;
  height: 56px;
  padding: 0 22px 0 23px;
  border-radius: 8px;
  background: #1a3f72;
}
.url {
  flex: 1;
  margin-left: -5px;
  padding-bottom: 2px;
  font-size: 28px;
  font-weight: 400;
  color: #a3b8d6;
}
.url b {
  font-weight: 400;
  color: #fff;
}
.rule {
  width: 2px;
  height: 32px;
  background: #9fb2cf;
}
.extension {
  margin-left: 212px;
}
.title-bar {
  display: flex;
  align-items: center;
  height: 146px;
  padding: 0 14px 2px 62px;
  border-bottom: 2px solid #eeeff1;
  background: #fff;
}
h1 {
  flex: 1;
  margin: 0 0 0 42px;
  font-size: 42px;
  line-height: 52px;
}
.save {
  width: 180px;
  height: 86px;
  border: 0;
  border-radius: 12px;
  background: #84bb4c;
  color: #fff;
  font-size: 28px;
}
.dashboard {
  overflow: hidden;
  padding: 46px 44px 0 52px;
  background: #f9fcff;
}
.filters {
  display: flex;
  gap: 24px;
  padding-left: 14px;
}
.filter {
  position: relative;
  box-sizing: border-box;
  display: flex;
  align-items: center;
  gap: 14px;
  width: 364px;
  height: 82px;
  padding: 0 28px 0 26px;
  border: 4px solid #eeeef0;
  border-radius: 14px;
  color: #949aab;
  font-size: 29px;
}
.filter.active {
  padding-right: 30px;
  border-color: #509ee3;
}
.filter select,
.filter input {
  flex: 1;
  min-width: 0;
  padding: 0;
  border: 0;
  outline: 0;
  appearance: none;
  background: none;
}
.float-label {
  position: absolute;
  top: -17px;
  left: 16px;
  padding: 0 12px;
  background: #f9fcff;
  font-size: 24px;
  line-height: 28px;
  letter-spacing: 1px;
}
.icon {
  flex: none;
}
.aa {
  width: 30px;
  font-size: 22px;
  text-align: center;
}
.grid {
  display: grid;
  grid-template-columns: repeat(18, 1fr);
  column-gap: 11px;
  margin-top: 104px;
}
.card {
  border-radius: 16px;
  background: #fff;
  box-shadow: 0 2px 6px rgba(0, 0, 0, 0.12);
}
h3 {
  margin: 0;
  padding: 16px 32px 0;
  font-size: 28px;
  line-height: 36px;
}
.stat {
  grid-column: span 5;
  display: flex;
  flex-direction: column;
  align-items: center;
  gap: 12px;
  box-sizing: border-box;
  height: 296px;
  padding-top: 33px;
  border-radius: 0 0 16px 16px;
}
.compared {
  padding-top: 12px;
}
.stat strong {
  font-size: 112px;
  line-height: 112px;
  font-weight: 900;
}
.stat span {
  font-size: 33px;
  line-height: 40px;
}
.trend {
  display: flex;
  align-items: center;
  gap: 18px;
  margin: 44px 0 0;
  color: #e5696c;
  font-size: 28px;
  line-height: 36px;
  font-weight: 900;
}
.wide {
  grid-column: 1 / -1;
  margin-top: 11px;
}
.chart {
  display: block;
  width: 100%;
}
.gridline {
  stroke: #f0f0f1;
  stroke-width: 2;
  stroke-dasharray: 10 10;
}
.axis {
  fill: none;
  stroke: #b4b7bd;
  stroke-width: 2;
}
.tick {
  fill: #949aab;
  font-size: 24px;
  font-weight: 900;
}
.axis-name {
  fill: #949aab;
  font-size: 29px;
  font-weight: 900;
}
.series {
  fill: none;
  stroke: #f5d45e;
  stroke-width: 4;
  stroke-linejoin: round;
}
.dot {
  fill: #fff;
  stroke: #f5d45e;
  stroke-width: 4;
}
h2 {
  grid-column: 1 / -1;
  margin: 0;
  padding: 0 0 4px 32px;
  font-size: 52px;
  line-height: 118px;
  font-weight: 900;
}
.half {
  grid-column: span 6;
  display: flex;
  flex-direction: column;
  overflow: hidden;
  height: 950px;
  margin-bottom: -8px;
}
.states {
  align-self: center;
  overflow: visible;
  width: 700px;
  height: 480px;
  margin-top: 140px;
}
.states polygon {
  stroke: #fff;
  stroke-width: 1;
  stroke-linejoin: round;
  vector-effect: non-scaling-stroke;
}
.legend {
  display: flex;
  flex-wrap: wrap;
  justify-content: center;
  column-gap: 24px;
  margin: 83px 82px 0 74px;
  padding: 0;
  list-style: none;
  font-size: 32px;
  line-height: 42px;
}
.legend li {
  display: flex;
  align-items: center;
  gap: 18px;
}
.legend i {
  width: 26px;
  height: 26px;
  border-radius: 50%;
}
.map {
  display: block;
  flex: 1;
  width: 100%;
  min-height: 0;
  margin-top: 14px;
}
.map path {
  vector-effect: non-scaling-stroke;
}
.forest {
  fill: #c5dfb5;
  stroke: #c5dfb5;
  stroke-width: 4;
  stroke-dasharray: 5 7 2 9 8 4;
}
.water,
.minor,
.border,
.major {
  fill: none;
  stroke-linejoin: round;
}
.water {
  stroke: #aad3df;
  stroke-width: 3;
}
.minor {
  stroke: #f8c4bb;
  stroke-width: 1;
}
.border {
  stroke: #c3bfc4;
  stroke-width: 2;
}
.major {
  stroke: #eda4b2;
  stroke-width: 2;
}
.town {
  fill: #fff;
  stroke: #777;
  stroke-width: 1;
}
.place {
  font-family: "Noto Sans", sans-serif;
  font-weight: 400;
  fill: #333;
  stroke: #f8f6f2;
  stroke-width: 2;
  paint-order: stroke;
}
.region {
  fill: #8d6f99;
  font-style: italic;
}
.pin {
  fill: #4a90d9;
  stroke: #fff;
  stroke-width: 2;
}
</style>
